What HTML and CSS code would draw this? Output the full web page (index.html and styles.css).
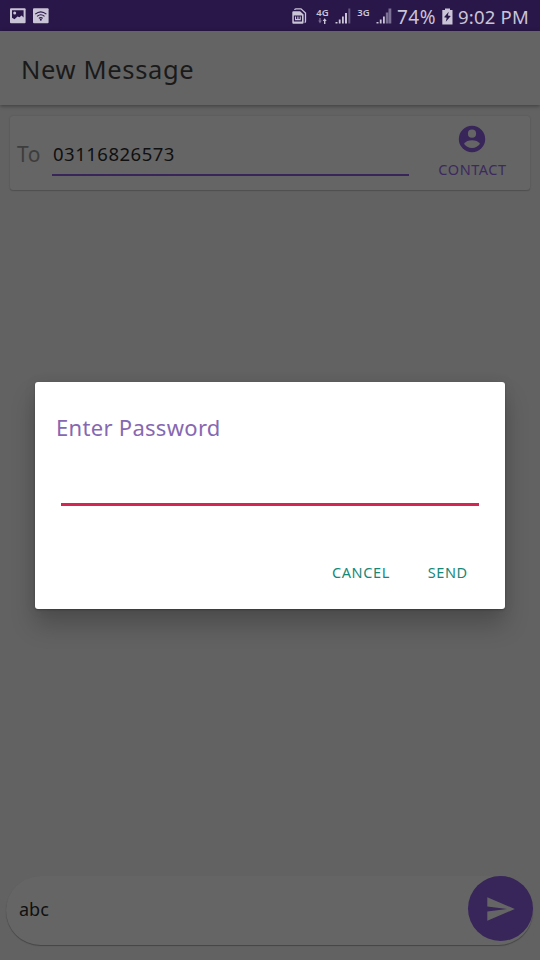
FILE: index.html
```html
<!DOCTYPE html>
<html lang="en">
<head>
<meta charset="utf-8">
<title>New Message</title>
<link rel="stylesheet" href="styles.css">
</head>
<body>
<div class="screen">
  <div class="status">
    <svg class="s-picture" width="16" height="16" viewBox="0 0 16 16"><rect x="0" y="0.3" width="15.6" height="15" rx="1" fill="#cac4d7"/><path d="M2 2.3h11.6v7.2l-2-2-2.1 1.7-2-.6-3 2.6L2 9.8z" fill="#291749"/><circle cx="4.7" cy="5" r="1.5" fill="#cac4d7"/></svg>
    <svg class="s-wifi" width="16" height="16" viewBox="0 0 16 16"><rect x="0" y="0.3" width="15.6" height="15" rx="1" fill="#cac4d7"/><g fill="none" stroke="#291749" stroke-width="1.1"><path d="M2.2 6.2q5.6-4.700 11.200 0M4.100 8.400q3.700-3.200 7.400 0M5.900 10.400q1.900-1.600 3.800 0"/></g><circle cx="7.800" cy="11.800" r="1" fill="#291749"/></svg>
    <div class="spacer"></div>
    <svg class="s-sim" width="15" height="17" viewBox="0 0 15 17"><path d="M2.8 2V1.7Q2.8.8 3.8.8H9L13.500 5v8.300q0 1-.9 1.200" fill="none" stroke="#cac4d7" stroke-width="1.3"/><path d="M1.3 3.200h6.800L11.600 6.500v8q0 1.200-1.200 1.200H1.300Q.3 15.700.3 14.500V4.300q0-1.100 1-1.100z" fill="#cac4d7"/><path d="M2.400 8h7v4.800h-7zM4.700 8v3M7.100 8v3" fill="none" stroke="#291749" stroke-width="1.200"/></svg>
    <div class="net net-4g"><span>4G</span><svg width="9" height="6" viewBox="0 0 9 6"><path d="M1.300 0h1.400v2.500h1.100L2 5.500.2 2.500h1.100z" fill="#786c91"/><path d="M6 6V3H4.700L6.700.2 8.700 3H7.400v3z" fill="#cac4d7"/></svg></div>
    <svg class="s-bars1" width="16" height="16" viewBox="0 0 16 16"><path d="M.5 14h2v1.500h-2zM3.800 11.500h1.800v4H3.800zM7 8.500h1.800v7H7zM10 5h2v10.500h-2z" fill="#cac4d7"/><path d="M13.300.5h2v15h-2z" fill="#65577f"/></svg>
    <div class="net net-3g"><span>3G</span></div>
    <svg class="s-bars2" width="16" height="16" viewBox="0 0 16 16"><path d="M.5 14h2v1.500h-2zM3.800 11.500h1.800v4H3.800zM7 8.500h1.800v7H7z" fill="#cac4d7"/><path d="M9.800 4.500h2.400v11H9.800zM12.500.5h2.800v15h-2.800z" fill="#7b7093"/></svg>
    <span class="percent">74%</span>
    <svg class="s-battery" width="11" height="17" viewBox="0 0 11 17"><path d="M3 .5h5V2h2.500v14.500H.3V2H3z" fill="#cac4d7"/><path d="M6.700 3.800 2 9.300l2.700.5-.9 4 5-5.700-2.900-.5z" fill="#291749"/></svg>
    <span class="time">9:02 PM</span>
  </div>
  <header class="appbar"><h1>New Message</h1></header>
  <section class="recipient">
    <span class="to">To</span>
    <div class="number">03116826573</div>
    <div class="contact">
      <svg width="28" height="28" viewBox="0 0 28 28"><circle cx="14" cy="14" r="13.200" fill="#38255a"/><circle cx="14" cy="8.700" r="4.100" fill="#656565"/><path d="M6 18.800c1.700-2.600 4.700-3.600 8-3.600s6.300 1 8 3.600c-1.700 2.600-4.500 4.200-8 4.200s-6.300-1.600-8-4.200z" fill="#656565"/></svg>
      <span>CONTACT</span>
    </div>
  </section>
  <div class="spacer"></div>
  <footer class="composer">
    <span class="draft">abc</span>
    <div class="send"><svg width="28" height="24" viewBox="0 0 28 24"><path d="M.3.3 27.800 12 .3 23.700V14.400L20 12 .3 9.600z" fill="#656565"/></svg></div>
  </footer>
</div>
<div class="dialog">
  <h2>Enter Password</h2>
  <div class="password"></div>
  <div class="actions"><span class="cancel">CANCEL</span><span class="confirm">SEND</span></div>
</div>
</body>
</html>
```
FILE: styles.css
```css
* { box-sizing: border-box; }
body { margin: 0; font-family: "Noto Sans", "Open Sans", sans-serif; }
h1, h2 { margin: 0; font-weight: 400; white-space: nowrap; }
svg { display: block; flex: none; }
.screen { width: 540px; height: 960px; display: flex; flex-direction: column; background: #626262; overflow: hidden; }
.spacer { flex: 1; }
.status { height: 31px; flex: none; display: flex; align-items: center; padding: 1px 12px 0 10px; background: #291749; color: #cac4d7; white-space: nowrap; }
.s-wifi { margin-left: 7px; }
.s-sim { margin-right: 9px; }
.net { height: 17px; font-size: 9.5px; line-height: 10px; font-weight: 600; display: flex; flex-direction: column; align-items: center; }
.net-4g { width: 13px; }
.s-bars1 { margin: 0 6px 0 6px; }
.net-3g { width: 13px; }
.s-bars2 { margin-left: 6px; }
.percent { width: 40px; margin-left: 5px; font-size: 19px; line-height: 24px; margin-top: 1px; letter-spacing: .5px; }
.s-battery { margin-left: 5px; }
.time { width: 70px; margin-left: 5px; font-size: 18.5px; letter-spacing: .2px; }
.appbar { height: 74px; flex: none; display: flex; align-items: center; padding: 2px 21px 0; background: #646464; box-shadow: 0 1px 4px rgba(0,0,0,.4); }
.appbar h1 { font-size: 25.5px; line-height: 34px; color: #1a1a1a; letter-spacing: .65px; }
.recipient { height: 74px; flex: none; margin: 11px 10px 0; display: flex; background: #656565; border-radius: 3px; box-shadow: 0 0 2px rgba(0,0,0,.15), 0 1px 1px rgba(0,0,0,.15); }
.to { flex: none; width: 42px; padding: 22px 0 0 7px; font-size: 21px; line-height: 32px; letter-spacing: .6px; color: #3d3d3d; }
.number { flex: none; width: 357px; height: 60px; padding: 22px 0 0 1px; border-bottom: 2px solid #38255a; font-size: 18.5px; line-height: 32px; color: #101010; letter-spacing: .5px; }
.contact { flex: none; width: 126px; margin-right: -5px; display: flex; flex-direction: column; align-items: center; padding-top: 9px; font-size: 14.5px; line-height: 20px; color: #3c2a5e; letter-spacing: .55px; }
.contact span { margin: 6px -1px 0 0; }
.composer { height: 69px; flex: none; margin: 0 7px 15px 6px; display: flex; align-items: center; padding-left: 13px; background: #656565; border-radius: 35px; box-shadow: 0 1px 1px rgba(0,0,0,.3); }
.draft { flex: 1; margin-top: -4px; font-size: 18px; color: #101010; }
.send { width: 65px; height: 65px; margin-top: -4px; border-radius: 50%; background: #38255a; display: flex; align-items: center; justify-content: center; }
.dialog { position: absolute; left: 35px; top: 382px; width: 470px; height: 227px; padding: 28px 26px 0; background: #fff; border-radius: 3px; box-shadow: 0 16px 24px rgba(0,0,0,.22), 0 1px 2px rgba(0,0,0,.25), 0 0 14px rgba(0,0,0,.06); }
.dialog h2 { margin-left: -5px; font-size: 22px; line-height: 34px; color: #8668b1; letter-spacing: .3px; }
.password { height: 62px; border-bottom: 3px solid #d32753; }
.actions { display: flex; justify-content: flex-end; padding: 55px 12px 0 0; font-size: 14.5px; line-height: 22px; color: #168878; }
.cancel { margin-right: 38px; letter-spacing: .6px; }
.confirm { letter-spacing: .5px; margin-right: -.5px; }
```
